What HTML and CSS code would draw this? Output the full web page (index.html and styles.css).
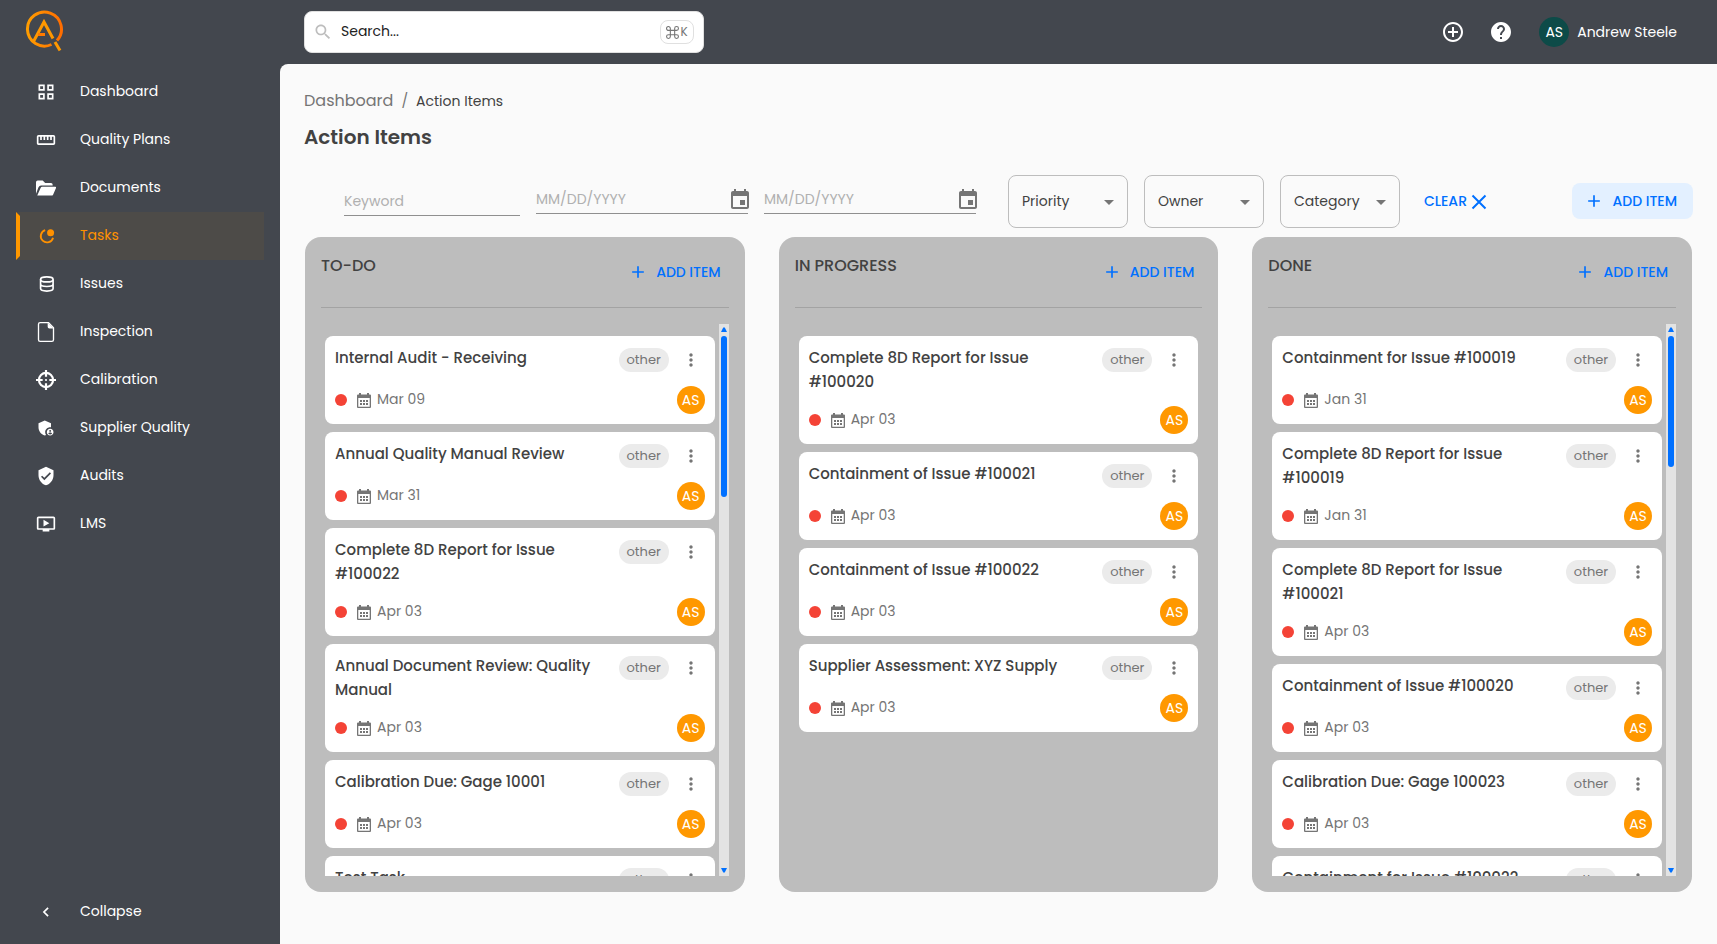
FILE: index.html
```html
<!DOCTYPE html>
<html lang="en">
<head>
<meta charset="utf-8">
<title>Action Items</title>
<link rel="stylesheet" href="styles.css">
</head>
<body>
<svg class="sprite" aria-hidden="true">
  <symbol id="i-plus" viewBox="0 0 24 24"><path d="M19 13h-6v6h-2v-6H5v-2h6V5h2v6h6v2z"/></symbol>
  <symbol id="i-more" viewBox="0 0 24 24"><path d="M12 8c1.100 0 2-.9 2-2s-.9-2-2-2-2 .9-2 2 .9 2 2 2zm0 2c-1.100 0-2 .9-2 2s.9 2 2 2 2-.9 2-2-.9-2-2-2zm0 6c-1.100 0-2 .9-2 2s.9 2 2 2 2-.9 2-2-.9-2-2-2z"/></symbol>
  <symbol id="i-cal" viewBox="0 0 14 15"><path fill-rule="evenodd" d="M2 0h2v1.500h6V0h2v1.500h1q1 0 1 1V14q0 1-1 1H1q-1 0-1-1V2.500q0-1 1-1h1zM1.300 5v8.700h11.400V5zM3 7h2v2H3zm3 0h2v2H6zm3 0h2v2H9zm-6 3h2v2H3zm3 0h2v2H6zm3 0h2v2H9z"/></symbol>
  <symbol id="i-event" viewBox="0 0 24 24"><path d="M17 12h-5v5h5v-5zM16 1v2H8V1H6v2H5c-1.110 0-1.990.9-1.990 2L3 19c0 1.100.89 2 2 2h14c1.100 0 2-.9 2-2V5c0-1.100-.9-2-2-2h-1V1h-2zm3 18H5V8h14v11z"/></symbol>
  <symbol id="i-drop" viewBox="0 0 24 24"><path d="M7 10l5 5 5-5z"/></symbol>
</svg>
<div class="app">
  <aside class="sidebar">
    <a class="logo" href="#" aria-label="Home">
      <svg width="40" height="44" viewBox="0 0 40 44" fill="none" stroke-width="3">
        <defs><linearGradient id="lg" x1="0" y1="0" x2="1" y2="0"><stop offset="0" stop-color="#ff9d00"/><stop offset="1" stop-color="#ff6d00"/></linearGradient></defs>
        <path stroke="url(#lg)" d="M27.500 35.500A17 17 0 1 1 33 31.500"/>
        <path stroke="#ff9800" d="M9.500 32.500L20 13l9 16.500"/>
        <path stroke="#ff7a00" d="M14 25.500h7"/>
        <path stroke="#ff9800" d="M31 33l5 8.500"/>
      </svg>
    </a>
    <nav class="nav">
      <a class="nav-item" href="#"><svg viewBox="0 0 24 24" fill="none" stroke="currentColor" stroke-width="2"><path d="M4 4h5.500v5.500H4zM14.500 4H20v5.500h-5.500zM4 14.500h5.500V20H4zM14.500 14.500H20V20h-5.500z"/></svg>Dashboard</a>
      <a class="nav-item" href="#"><svg viewBox="0 0 24 24"><path d="M21 6H3c-1.100 0-2 .9-2 2v8c0 1.100.9 2 2 2h18c1.100 0 2-.9 2-2V8c0-1.100-.9-2-2-2zm0 10H3V8h2v4h2V8h2v4h2V8h2v4h2V8h2v4h2V8h2v8z"/></svg>Quality Plans</a>
      <a class="nav-item" href="#"><svg viewBox="0 0 24 24"><path d="M0 19V5q0-2 2-2h6l3 3h7q2 0 2 2v1H6q-2 0-3 2zM1.500 21l4-9q.5-1.500 2-1.500H23q1.500 0 1 1.500l-3.500 8q-.5 1-2 1z"/></svg>Documents</a>
      <a class="nav-item active" href="#"><svg viewBox="0 0 24 24"><path fill="none" stroke="currentColor" stroke-width="2.200" d="M11 5a7.500 7.500 0 1 0 9.500 9"/><circle cx="17.500" cy="8" r="4.200"/></svg>Tasks</a>
      <a class="nav-item" href="#"><svg viewBox="0 0 24 24" fill="none" stroke="currentColor" stroke-width="2"><ellipse cx="13" cy="6.500" rx="7.500" ry="3"/><path d="M5.500 6.500v11c0 4 15 4 15 0v-11M5.500 12c0 4 15 4 15 0"/></svg>Issues</a>
      <a class="nav-item" href="#"><svg viewBox="0 0 24 24"><path fill="none" stroke="currentColor" stroke-width="1.600" d="M15 .8H5q-2 0-2 2v18.400q0 2 2 2h14q2 0 2-2V7z"/><path d="M14 .8L21 7.800h-5q-2 0-2-2z"/></svg>Inspection</a>
      <a class="nav-item" href="#"><svg viewBox="0 0 24 24"><circle cx="12" cy="12" r="8.500" fill="none" stroke="currentColor" stroke-width="2.600"/><path d="M10.700 0h2.600v8h-2.600zM10.700 16h2.600v8h-2.600zM0 10.700h8v2.600H0zM16 10.700h8v2.600h-8z"/><circle cx="12" cy="12" r="1.300"/></svg>Calibration</a>
      <a class="nav-item" href="#"><svg viewBox="0 0 24 24"><path d="M17 11c.34 0 .67.04 1 .09V6.270L10.500 3 3 6.270v4.910c0 4.540 3.200 8.790 7.500 9.820.55-.13 1.080-.32 1.600-.55-.69-.98-1.100-2.170-1.100-3.450 0-3.310 2.690-6 6-6z"/><path d="M17 13c-2.210 0-4 1.790-4 4s1.790 4 4 4 4-1.790 4-4-1.790-4-4-4zm0 1.380c.62 0 1.120.51 1.120 1.120s-.51 1.120-1.120 1.120-1.120-.51-1.120-1.120.5-1.120 1.120-1.120zm0 5.370c-.93 0-1.740-.46-2.240-1.170.05-.72 1.510-1.080 2.240-1.080s2.190.36 2.240 1.080c-.5.710-1.310 1.170-2.240 1.170z"/></svg>Supplier Quality</a>
      <a class="nav-item" href="#"><svg viewBox="0 0 24 24"><path d="M12 1L3 5v6c0 5.550 3.840 10.740 9 12 5.160-1.260 9-6.450 9-12V5l-9-4zm-2 16l-4-4 1.410-1.410L10 14.170l6.590-6.590L18 9l-8 8z"/></svg>Audits</a>
      <a class="nav-item" href="#"><svg viewBox="0 0 24 24"><path d="M21 3H3c-1.110 0-2 .89-2 2v12c0 1.100.89 2 2 2h5v2h8v-2h5c1.100 0 2-.9 2-2V5c0-1.110-.9-2-2-2zm0 14H3V5h18v12zM9 7v8l7-4z"/></svg>LMS</a>
    </nav>
    <button class="nav-item collapse" type="button"><svg viewBox="0 0 24 24" fill="none" stroke="currentColor" stroke-width="2"><path d="M14.500 7l-5 5 5 5"/></svg>Collapse</button>
  </aside>
  <div class="page">
    <header class="topbar">
      <label class="search">
        <svg width="20" height="20" viewBox="0 0 24 24"><path d="M15.500 14h-.79l-.28-.27C15.410 12.590 16 11.110 16 9.500 16 5.910 13.090 3 9.500 3S3 5.910 3 9.500 5.910 16 9.500 16c1.610 0 3.090-.59 4.230-1.570l.27.280v.79l5 4.990L20.490 19l-4.990-5zm-6 0C7.010 14 5 11.990 5 9.500S7.010 5 9.500 5 14 7.010 14 9.500 11.990 14 9.500 14z"/></svg>
        <input type="text" placeholder="Search..." aria-label="Search">
        <kbd><svg width="13" height="13" viewBox="0 0 24 24" fill="none" stroke="currentColor" stroke-width="2"><path d="M8 8H5a3.500 3.500 0 1 1 3-3.500v15A3.500 3.500 0 1 1 4.500 16h15a3.500 3.500 0 1 1-3.500 3.500v-15A3.500 3.500 0 1 1 19.500 8z"/></svg>K</kbd>
      </label>
      <div class="tools">
        <button class="icon-btn" type="button" aria-label="Add"><svg width="24" height="24" viewBox="0 0 24 24"><path d="M13 7h-2v4H7v2h4v4h2v-4h4v-2h-4V7zm-1-5C6.480 2 2 6.480 2 12s4.480 10 10 10 10-4.480 10-10S17.520 2 12 2zm0 18c-4.410 0-8-3.590-8-8s3.590-8 8-8 8 3.590 8 8-3.590 8-8 8z"/></svg></button>
        <button class="icon-btn" type="button" aria-label="Help"><svg width="24" height="24" viewBox="0 0 24 24"><path d="M12 2C6.480 2 2 6.480 2 12s4.480 10 10 10 10-4.480 10-10S17.520 2 12 2zm1 17h-2v-2h2v2zm2.070-7.750l-.9.920C13.450 12.900 13 13.500 13 15h-2v-.5c0-1.100.45-2.100 1.170-2.830l1.240-1.260c.37-.36.59-.86.590-1.410 0-1.100-.9-2-2-2s-2 .9-2 2H8c0-2.210 1.790-4 4-4s4 1.790 4 4c0 .88-.36 1.680-.93 2.250z"/></svg></button>
        <button class="user" type="button"><span class="user-avatar">AS</span>Andrew Steele</button>
      </div>
    </header>
    <main class="main">
      <div class="crumbs"><a href="#">Dashboard</a><span class="sep">/</span><span>Action Items</span></div>
      <h1>Action Items</h1>
      <form class="filters">
        <input class="line keyword" type="text" placeholder="Keyword" aria-label="Keyword">
        <div class="line date"><input type="text" placeholder="MM/DD/YYYY" aria-label="From date"><button type="button" aria-label="Choose from date"><svg width="24" height="24"><use href="#i-event"/></svg></button></div>
        <div class="line date"><input type="text" placeholder="MM/DD/YYYY" aria-label="To date"><button type="button" aria-label="Choose to date"><svg width="24" height="24"><use href="#i-event"/></svg></button></div>
        <div class="selects">
          <div class="select"><select aria-label="Priority"><option>Priority</option></select><svg width="24" height="24"><use href="#i-drop"/></svg></div>
          <div class="select"><select aria-label="Owner"><option>Owner</option></select><svg width="24" height="24"><use href="#i-drop"/></svg></div>
          <div class="select"><select aria-label="Category"><option>Category</option></select><svg width="24" height="24"><use href="#i-drop"/></svg></div>
        </div>
        <button class="text-btn clear" type="button">CLEAR<svg width="16" height="16" viewBox="0 0 16 16" fill="none" stroke="currentColor" stroke-width="2"><path d="M1.500 1.500l13 13M14.500 1.500l-13 13"/></svg></button>
        <button class="text-btn add filled" type="button"><svg width="20" height="20"><use href="#i-plus"/></svg>ADD ITEM</button>
      </form>
      <div class="board">
        <section class="column">
          <div class="col-head"><h2>TO-DO</h2><button class="text-btn add" type="button"><svg width="20" height="20"><use href="#i-plus"/></svg>ADD ITEM</button></div>
          <div class="col-body">
            <div class="list">
              <article class="card"><div class="top"><h3>Internal Audit - Receiving</h3><span class="tag">other</span><button class="more" type="button" aria-label="More"><svg width="20" height="20"><use href="#i-more"/></svg></button></div><div class="bottom"><i class="dot"></i><svg class="cal"><use href="#i-cal"/></svg><time>Mar 09</time><span class="avatar">AS</span></div></article>
              <article class="card"><div class="top"><h3>Annual Quality Manual Review</h3><span class="tag">other</span><button class="more" type="button" aria-label="More"><svg width="20" height="20"><use href="#i-more"/></svg></button></div><div class="bottom"><i class="dot"></i><svg class="cal"><use href="#i-cal"/></svg><time>Mar 31</time><span class="avatar">AS</span></div></article>
              <article class="card"><div class="top"><h3>Complete 8D Report for Issue #100022</h3><span class="tag">other</span><button class="more" type="button" aria-label="More"><svg width="20" height="20"><use href="#i-more"/></svg></button></div><div class="bottom"><i class="dot"></i><svg class="cal"><use href="#i-cal"/></svg><time>Apr 03</time><span class="avatar">AS</span></div></article>
              <article class="card"><div class="top"><h3>Annual Document Review: Quality Manual</h3><span class="tag">other</span><button class="more" type="button" aria-label="More"><svg width="20" height="20"><use href="#i-more"/></svg></button></div><div class="bottom"><i class="dot"></i><svg class="cal"><use href="#i-cal"/></svg><time>Apr 03</time><span class="avatar">AS</span></div></article>
              <article class="card"><div class="top"><h3>Calibration Due: Gage 10001</h3><span class="tag">other</span><button class="more" type="button" aria-label="More"><svg width="20" height="20"><use href="#i-more"/></svg></button></div><div class="bottom"><i class="dot"></i><svg class="cal"><use href="#i-cal"/></svg><time>Apr 03</time><span class="avatar">AS</span></div></article>
              <article class="card"><div class="top"><h3>Test Task</h3><span class="tag">other</span><button class="more" type="button" aria-label="More"><svg width="20" height="20"><use href="#i-more"/></svg></button></div></article>
            </div>
            <div class="scroll"><svg width="6" height="5" viewBox="0 0 6 5"><path d="M0 5l2-4q1-1.500 2 0l2 4z"/></svg><div class="track"><div class="thumb" style="height:30.5%"></div></div><svg width="6" height="5" viewBox="0 0 6 5"><path d="M0 0l2 4q1 1.500 2 0l2-4z"/></svg></div>
          </div>
        </section>
        <section class="column">
          <div class="col-head"><h2>IN PROGRESS</h2><button class="text-btn add" type="button"><svg width="20" height="20"><use href="#i-plus"/></svg>ADD ITEM</button></div>
          <div class="col-body">
            <div class="list">
              <article class="card"><div class="top"><h3>Complete 8D Report for Issue #100020</h3><span class="tag">other</span><button class="more" type="button" aria-label="More"><svg width="20" height="20"><use href="#i-more"/></svg></button></div><div class="bottom"><i class="dot"></i><svg class="cal"><use href="#i-cal"/></svg><time>Apr 03</time><span class="avatar">AS</span></div></article>
              <article class="card"><div class="top"><h3>Containment of Issue #100021</h3><span class="tag">other</span><button class="more" type="button" aria-label="More"><svg width="20" height="20"><use href="#i-more"/></svg></button></div><div class="bottom"><i class="dot"></i><svg class="cal"><use href="#i-cal"/></svg><time>Apr 03</time><span class="avatar">AS</span></div></article>
              <article class="card"><div class="top"><h3>Containment of Issue #100022</h3><span class="tag">other</span><button class="more" type="button" aria-label="More"><svg width="20" height="20"><use href="#i-more"/></svg></button></div><div class="bottom"><i class="dot"></i><svg class="cal"><use href="#i-cal"/></svg><time>Apr 03</time><span class="avatar">AS</span></div></article>
              <article class="card"><div class="top"><h3>Supplier Assessment: XYZ Supply</h3><span class="tag">other</span><button class="more" type="button" aria-label="More"><svg width="20" height="20"><use href="#i-more"/></svg></button></div><div class="bottom"><i class="dot"></i><svg class="cal"><use href="#i-cal"/></svg><time>Apr 03</time><span class="avatar">AS</span></div></article>
            </div>
          </div>
        </section>
        <section class="column">
          <div class="col-head"><h2>DONE</h2><button class="text-btn add" type="button"><svg width="20" height="20"><use href="#i-plus"/></svg>ADD ITEM</button></div>
          <div class="col-body">
            <div class="list">
              <article class="card"><div class="top"><h3>Containment for Issue #100019</h3><span class="tag">other</span><button class="more" type="button" aria-label="More"><svg width="20" height="20"><use href="#i-more"/></svg></button></div><div class="bottom"><i class="dot"></i><svg class="cal"><use href="#i-cal"/></svg><time>Jan 31</time><span class="avatar">AS</span></div></article>
              <article class="card"><div class="top"><h3>Complete 8D Report for Issue #100019</h3><span class="tag">other</span><button class="more" type="button" aria-label="More"><svg width="20" height="20"><use href="#i-more"/></svg></button></div><div class="bottom"><i class="dot"></i><svg class="cal"><use href="#i-cal"/></svg><time>Jan 31</time><span class="avatar">AS</span></div></article>
              <article class="card"><div class="top"><h3>Complete 8D Report for Issue #100021</h3><span class="tag">other</span><button class="more" type="button" aria-label="More"><svg width="20" height="20"><use href="#i-more"/></svg></button></div><div class="bottom"><i class="dot"></i><svg class="cal"><use href="#i-cal"/></svg><time>Apr 03</time><span class="avatar">AS</span></div></article>
              <article class="card"><div class="top"><h3>Containment of Issue #100020</h3><span class="tag">other</span><button class="more" type="button" aria-label="More"><svg width="20" height="20"><use href="#i-more"/></svg></button></div><div class="bottom"><i class="dot"></i><svg class="cal"><use href="#i-cal"/></svg><time>Apr 03</time><span class="avatar">AS</span></div></article>
              <article class="card"><div class="top"><h3>Calibration Due: Gage 100023</h3><span class="tag">other</span><button class="more" type="button" aria-label="More"><svg width="20" height="20"><use href="#i-more"/></svg></button></div><div class="bottom"><i class="dot"></i><svg class="cal"><use href="#i-cal"/></svg><time>Apr 03</time><span class="avatar">AS</span></div></article>
              <article class="card"><div class="top"><h3>Containment for Issue #100022</h3><span class="tag">other</span><button class="more" type="button" aria-label="More"><svg width="20" height="20"><use href="#i-more"/></svg></button></div></article>
            </div>
            <div class="scroll"><svg width="6" height="5" viewBox="0 0 6 5"><path d="M0 5l2-4q1-1.500 2 0l2 4z"/></svg><div class="track"><div class="thumb" style="height:24.8%"></div></div><svg width="6" height="5" viewBox="0 0 6 5"><path d="M0 0l2 4q1 1.500 2 0l2-4z"/></svg></div>
          </div>
        </section>
      </div>
    </main>
  </div>
</div>
</body>
</html>
```
FILE: styles.css
```css
* { box-sizing: border-box; }
body, h1, h2, h3 { margin: 0; }
body, input, select, button, kbd { font-family: Poppins, Inter, "Open Sans", sans-serif; font-size: 14px; }
body { background: #43474e; color: #424242; }
button { border: 0; padding: 0; background: none; color: inherit; }
a { color: inherit; text-decoration: none; }
svg { fill: currentColor; flex: none; }
svg[fill="none"] { fill: none; }
.sprite { position: absolute; width: 0; height: 0; }

.app { display: flex; height: 100vh; }
.sidebar { flex: none; width: 280px; padding: 0 16px 8px; display: flex; flex-direction: column; color: #fff; }
.logo { height: 68px; padding: 9px 8px; }
.nav { flex: 1; }
.nav-item { display: flex; align-items: center; gap: 24px; width: 100%; height: 48px; padding: 0 16px 1px; border: 4px solid transparent; text-align: left; }
.nav-item svg { width: 20px; height: 20px; }
.nav-item.active { background: #4d4b48; color: #ff9100; border-left-color: #ff9800; }

.page { flex: 1; min-width: 0; display: flex; flex-direction: column; }
.topbar { flex: none; height: 64px; padding: 0 40px 0 24px; display: flex; align-items: center; justify-content: space-between; }
.search { width: 400px; height: 42px; padding: 0 9px 0 8px; display: flex; align-items: center; background: #fff; border: 1px solid #e0e0e0; border-radius: 8px; color: #bdbdbd; }
.search input { flex: 1; min-width: 0; border: 0; outline: 0; padding: 0 8px 2px; background: none; color: #212121; }
.search input::placeholder { color: #212121; opacity: 1; }
.search kbd { display: flex; align-items: center; justify-content: center; gap: 1px; width: 34px; height: 24px; border: 1px solid #e0e0e0; border-radius: 8px; color: #757575; font-size: 12px; }
.tools { display: flex; align-items: center; gap: 24px; color: #fff; }
.icon-btn { display: flex; }
.user { display: flex; align-items: center; gap: 8px; margin-left: 2px; }
.user-avatar { display: grid; place-items: center; width: 30px; height: 30px; border-radius: 50%; background: #0d4b48; }

.main { flex: 1; min-height: 0; display: flex; flex-direction: column; padding: 25px 24px 52px; background: #fafafa; border-radius: 8px 0 0 0; }
.crumbs { display: flex; align-items: center; gap: 8px; line-height: 24px; }
.crumbs a { font-size: 16px; color: #757575; }
.crumbs .sep { color: #757575; }
h1 { margin-top: 9px; font-size: 20px; line-height: 30px; font-weight: 600; }

.filters { display: flex; align-items: center; gap: 16px; height: 53px; margin: 23px 0 9px; padding-left: 40px; }
.line { border: 0; border-bottom: 1px solid #8f8f8f; background: none; height: 29px; outline: 0; padding: 0; }
.keyword { width: 176px; }
.date { display: flex; align-items: center; justify-content: space-between; width: 212px; height: 28px; margin-bottom: 3px; }
.date input { flex: 1; min-width: 0; border: 0; outline: 0; background: none; padding: 0; }
.date button { display: flex; margin-right: -4px; color: #757575; }
.line::placeholder, .line input::placeholder { color: #b0b0b0; opacity: 1; }
.selects { display: flex; gap: 16px; margin-left: 16px; }
.select { display: grid; width: 120px; height: 53px; }
.select > * { grid-area: 1 / 1; }
.select select { appearance: none; width: 100%; border: 1px solid #bdbdbd; border-radius: 8px; background: none; padding: 0 13px 1px; color: #424242; }
.select svg { align-self: center; justify-self: end; margin-right: 7px; color: #757575; pointer-events: none; }
.text-btn { display: flex; align-items: center; color: #0070ff; font-weight: 500; }
.clear { gap: 4px; margin-left: 8px; }
.add { gap: 8px; height: 36px; padding: 0 8px; }
.filled { margin: 0 0 1px auto; padding: 0 16px 0 12px; background: #e3f0ff; border-radius: 8px; }

.board { flex: 1; min-height: 0; display: grid; grid-template-columns: repeat(3, minmax(0, 1fr)); gap: 34px; padding: 0 1px; }
.column { min-height: 0; display: flex; flex-direction: column; padding: 17px 16px 16px; background: #bdbdbd; border-radius: 16px; }
.col-head { flex: none; display: flex; justify-content: space-between; height: 54px; border-bottom: 1px solid #a3a3a3; }
h2 { font-size: 16px; line-height: 24px; font-weight: 500; }
.col-body { flex: 1; min-height: 0; display: flex; margin-top: 16px; }
.list { flex: 1; min-width: 0; overflow: hidden; padding: 12px 4px 0; display: flex; flex-direction: column; gap: 8px; }
.card { flex: none; padding: 10px; background: #fff; border-radius: 8px; }
.top { display: flex; gap: 8px; min-height: 28px; margin-bottom: 12px; }
h3 { flex: 1; min-width: 0; padding-right: 12px; font-size: 15px; line-height: 24px; font-weight: 500; }
.tag { flex: none; display: grid; place-items: center; width: 50px; height: 24px; margin-top: 2px; border-radius: 12px; background: #ebebeb; color: #757575; font-size: 13px; }
.more { display: grid; place-items: center; width: 28px; height: 28px; color: #757575; }
.bottom { display: flex; align-items: center; color: #757575; }
.bottom time { padding-bottom: 2px; }
.dot { width: 12px; height: 12px; margin-right: 10px; border-radius: 50%; background: #f44336; }
.cal { width: 14px; height: 15px; margin-right: 6px; }
.avatar { display: grid; place-items: center; width: 28px; height: 28px; margin-left: auto; border-radius: 50%; background: #ff9800; color: #fff; }
.scroll { flex: none; width: 10px; display: flex; flex-direction: column; align-items: center; gap: 4px; padding: 3px 0; background: #e3e3e3; color: #0070ff; }
.track { flex: 1; width: 6px; }
.thumb { border-radius: 3px; background: #0070ff; }
```
